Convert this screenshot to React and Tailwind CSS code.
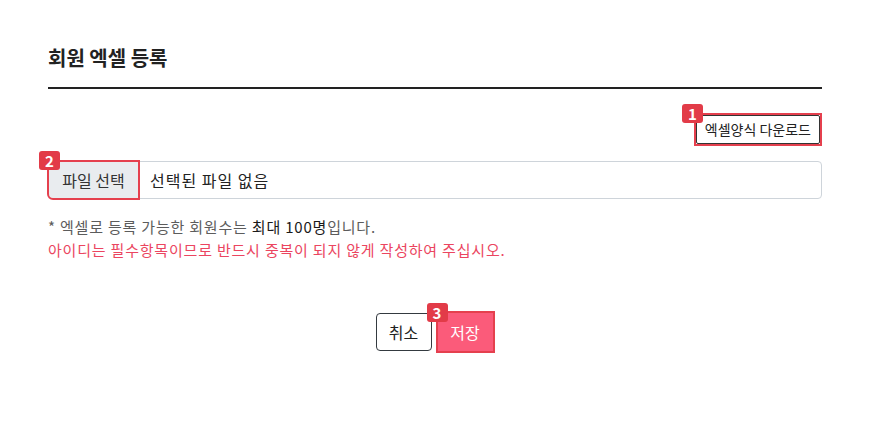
import React from "react";

const Badge = ({ n, className }) => (
  <span
    className={`absolute z-10 flex h-[19px] w-[21px] items-center justify-center rounded-[3px] bg-[#e23b48] text-[15px] font-bold leading-none text-white ${className}`}
  >
    {n}
  </span>
);

const MemberExcelUpload = () => {
  return (
    <div
      className="min-h-[445px] w-full bg-white px-12 pt-[44px] text-[#222]"
      style={{ fontFamily: '"Noto Sans CJK KR", "Noto Sans", sans-serif' }}
    >
      <h2 className="border-b-2 border-[#222] pb-[15px] text-[20px] font-bold leading-7 text-[#222]">
        회원 엑셀 등록
      </h2>

      <div className="mt-6 flex justify-end">
        <div className="relative border-2 border-[#e5404e]">
          <Badge n="1" className="-left-[14px] -top-[11px]" />
          <button
            type="button"
            className="flex h-[29px] items-center rounded-[2px] border border-[#333] bg-white px-[8px] text-[14px] text-[#222]"
          >
            엑셀양식 다운로드
          </button>
        </div>
      </div>

      <div className="mt-[15px] flex h-[38px] items-stretch rounded border border-[#ced4da]">
        <div className="relative flex">
          <Badge n="2" className="-left-[10px] -top-[11px]" />
          <button
            type="button"
            className="w-[89px] rounded-l bg-[#e9ecef] text-[16px] text-[#333] outline-2 outline-[#e5404e]"
          >
            파일 선택
          </button>
        </div>
        <span className="flex items-center pl-3 text-[16px] tracking-[1px] text-[#222]">
          선택된 파일 없음
        </span>
      </div>

      <div className="mt-[16px] text-[15px] leading-[23px] tracking-[0.8px]">
        <p className="text-[#5c5c5c]">
          * 엑셀로 등록 가능한 회원수는{" "}
          <span className="text-[#1a1a1a]">최대 100명</span>
          입니다.
        </p>
        <p className="text-[#eb4560]">
          아이디는 필수항목이므로 반드시 중복이 되지 않게 작성하여 주십시오.
        </p>
      </div>

      <div className="mt-[50px] flex items-center justify-center gap-[4px]">
        <button
          type="button"
          className="h-[38px] w-[56px] rounded border border-[#343a40] bg-white text-[16px] text-[#222]"
        >
          취소
        </button>
        <div className="relative border-2 border-[#e5404e]">
          <Badge n="3" className="-left-[11px] -top-[10px]" />
          <button
            type="button"
            className="flex h-[38px] w-[55px] items-center justify-center bg-[#fb5b7a] text-[16px] text-white"
          >
            저장
          </button>
        </div>
      </div>
    </div>
  );
};

export default function App() {
  return <MemberExcelUpload />;
}
